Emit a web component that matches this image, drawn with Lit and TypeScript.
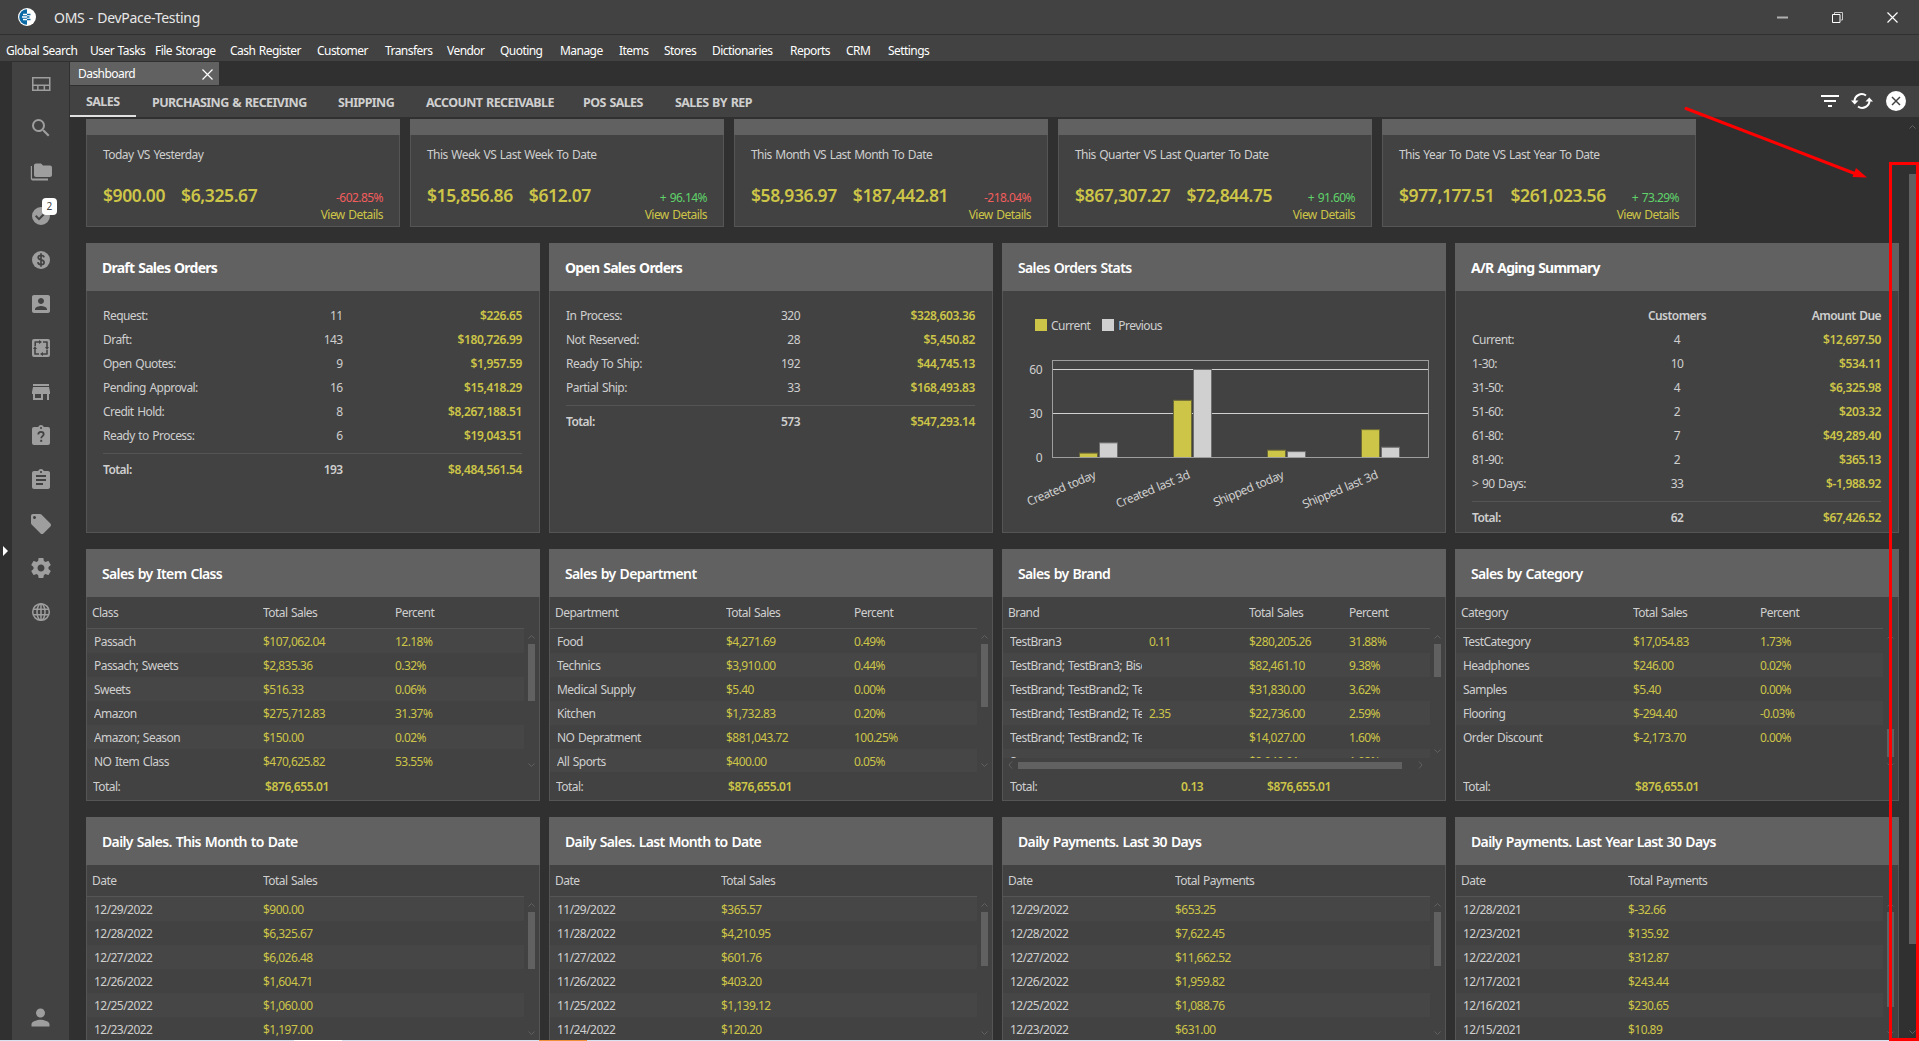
import { LitElement, css, html, svg } from "lit";
import { customElement, property } from "lit/decorators.js";
import { classMap } from "lit/directives/class-map.js";
import { styleMap } from "lit/directives/style-map.js";

interface MenuItem {
  label: string;
  width: number;
}

interface Kpi {
  title: string;
  caption: string;
  current: string;
  previous: string;
  change: string;
}

interface Summary {
  title: string;
  centered?: boolean;
  head?: string[];
  rows: string[][];
  total: string[];
}

interface Grid {
  title: string;
  // column starts in px, measured from the card's left edge
  cols: number[];
  head: string[];
  rows: string[][];
  stripe: "odd" | "even";
  total?: string[];
  totalCols?: number[];
  thumb: { top: number; height: number };
  horizontal?: boolean;
}

const MENU: MenuItem[] = [
  { label: "Global Search", width: 84 },
  { label: "User Tasks", width: 65 },
  { label: "File Storage", width: 75 },
  { label: "Cash Register", width: 87 },
  { label: "Customer", width: 68 },
  { label: "Transfers", width: 62 },
  { label: "Vendor", width: 53 },
  { label: "Quoting", width: 60 },
  { label: "Manage", width: 59 },
  { label: "Items", width: 45 },
  { label: "Stores", width: 48 },
  { label: "Dictionaries", width: 78 },
  { label: "Reports", width: 56 },
  { label: "CRM", width: 42 },
  { label: "Settings", width: 50 },
];

const SECTIONS: MenuItem[] = [
  { label: "SALES", width: 66 },
  { label: "PURCHASING & RECEIVING", width: 186 },
  { label: "SHIPPING", width: 88 },
  { label: "ACCOUNT RECEIVABLE", width: 157 },
  { label: "POS SALES", width: 92 },
  { label: "SALES BY REP", width: 108 },
];

const KPIS: Kpi[] = [
  { title: "Today", caption: "Today VS Yesterday", current: "$900.00", previous: "$6,325.67", change: "-602.85%" },
  { title: "This Week", caption: "This Week VS Last Week To Date", current: "$15,856.86", previous: "$612.07", change: "+ 96.14%" },
  { title: "This Month", caption: "This Month VS Last Month To Date", current: "$58,936.97", previous: "$187,442.81", change: "-218.04%" },
  { title: "This Quarter", caption: "This Quarter VS Last Quarter To Date", current: "$867,307.27", previous: "$72,844.75", change: "+ 91.60%" },
  { title: "This Year", caption: "This Year To Date VS Last Year To Date", current: "$977,177.51", previous: "$261,023.56", change: "+ 73.29%" },
];

const DRAFT_ORDERS: Summary = {
  title: "Draft Sales Orders",
  rows: [
    ["Request:", "11", "$226.65"],
    ["Draft:", "143", "$180,726.99"],
    ["Open Quotes:", "9", "$1,957.59"],
    ["Pending Approval:", "16", "$15,418.29"],
    ["Credit Hold:", "8", "$8,267,188.51"],
    ["Ready to Process:", "6", "$19,043.51"],
  ],
  total: ["Total:", "193", "$8,484,561.54"],
};

const OPEN_ORDERS: Summary = {
  title: "Open Sales Orders",
  rows: [
    ["In Process:", "320", "$328,603.36"],
    ["Not Reserved:", "28", "$5,450.82"],
    ["Ready To Ship:", "192", "$44,745.13"],
    ["Partial Ship:", "33", "$168,493.83"],
  ],
  total: ["Total:", "573", "$547,293.14"],
};

const AGING: Summary = {
  title: "A/R Aging Summary",
  centered: true,
  head: ["", "Customers", "Amount Due"],
  rows: [
    ["Current:", "4", "$12,697.50"],
    ["1-30:", "10", "$534.11"],
    ["31-50:", "4", "$6,325.98"],
    ["51-60:", "2", "$203.32"],
    ["61-80:", "7", "$49,289.40"],
    ["81-90:", "2", "$365.13"],
    ["> 90 Days:", "33", "$-1,988.92"],
  ],
  total: ["Total:", "62", "$67,426.52"],
};

const SALES_GRIDS: Grid[] = [
  {
    title: "Sales by Item Class",
    cols: [8, 177, 309],
    head: ["Class", "Total Sales", "Percent"],
    rows: [
      ["Passach", "$107,062.04", "12.18%"],
      ["Passach; Sweets", "$2,835.36", "0.32%"],
      ["Sweets", "$516.33", "0.06%"],
      ["Amazon", "$275,712.83", "31.37%"],
      ["Amazon; Season", "$150.00", "0.02%"],
      ["NO Item Class", "$470,625.82", "53.55%"],
    ],
    stripe: "odd",
    total: ["Total:", "$876,655.01"],
    totalCols: [7, 179],
    thumb: { top: 3, height: 57 },
  },
  {
    title: "Sales by Department",
    cols: [8, 177, 305],
    head: ["Department", "Total Sales", "Percent"],
    rows: [
      ["Food", "$4,271.69", "0.49%"],
      ["Technics", "$3,910.00", "0.44%"],
      ["Medical Supply", "$5.40", "0.00%"],
      ["Kitchen", "$1,732.83", "0.20%"],
      ["NO Depratment", "$881,043.72", "100.25%"],
      ["All Sports", "$400.00", "0.05%"],
    ],
    stripe: "even",
    total: ["Total:", "$876,655.01"],
    totalCols: [7, 179],
    thumb: { top: 3, height: 63 },
  },
  {
    title: "Sales by Brand",
    cols: [8, 147, 247, 347],
    head: ["Brand", "", "Total Sales", "Percent"],
    rows: [
      ["TestBran3", "0.11", "$280,205.26", "31.88%"],
      ["TestBrand; TestBran3; Biscuit", "", "$82,461.10", "9.38%"],
      ["TestBrand; TestBrand2; TestBran3", "", "$31,830.00", "3.62%"],
      ["TestBrand; TestBrand2; TestBran3", "2.35", "$22,736.00", "2.59%"],
      ["TestBrand; TestBrand2; TestBran3", "", "$14,027.00", "1.60%"],
      ["Samsung", "", "$8,949.01", "1.02%"],
    ],
    stripe: "even",
    total: ["Total:", "0.13", "$876,655.01"],
    totalCols: [8, 179, 265],
    thumb: { top: 3, height: 33 },
    horizontal: true,
  },
  {
    title: "Sales by Category",
    cols: [8, 178, 305],
    head: ["Category", "Total Sales", "Percent"],
    rows: [
      ["TestCategory", "$17,054.83", "1.73%"],
      ["Headphones", "$246.00", "0.02%"],
      ["Samples", "$5.40", "0.00%"],
      ["Flooring", "$-294.40", "-0.03%"],
      ["Order Discount", "$-2,173.70", "0.00%"],
    ],
    stripe: "even",
    total: ["Total:", "$876,655.01"],
    totalCols: [8, 180],
    thumb: { top: 88, height: 28 },
  },
];

const DAILY_GRIDS: Grid[] = [
  {
    title: "Daily Sales. This Month to Date",
    cols: [8, 177],
    head: ["Date", "Total Sales"],
    rows: [
      ["12/29/2022", "$900.00"],
      ["12/28/2022", "$6,325.67"],
      ["12/27/2022", "$6,026.48"],
      ["12/26/2022", "$1,604.71"],
      ["12/25/2022", "$1,060.00"],
      ["12/23/2022", "$1,197.00"],
    ],
    stripe: "odd",
    thumb: { top: 3, height: 57 },
  },
  {
    title: "Daily Sales. Last Month to Date",
    cols: [8, 172],
    head: ["Date", "Total Sales"],
    rows: [
      ["11/29/2022", "$365.57"],
      ["11/28/2022", "$4,210.95"],
      ["11/27/2022", "$601.76"],
      ["11/26/2022", "$403.20"],
      ["11/25/2022", "$1,139.12"],
      ["11/24/2022", "$120.20"],
    ],
    stripe: "odd",
    thumb: { top: 3, height: 54 },
  },
  {
    title: "Daily Payments. Last 30 Days",
    cols: [8, 173],
    head: ["Date", "Total Payments"],
    rows: [
      ["12/29/2022", "$653.25"],
      ["12/28/2022", "$7,622.45"],
      ["12/27/2022", "$11,662.52"],
      ["12/26/2022", "$1,959.82"],
      ["12/25/2022", "$1,088.76"],
      ["12/23/2022", "$631.00"],
    ],
    stripe: "odd",
    thumb: { top: 3, height: 54 },
  },
  {
    title: "Daily Payments. Last Year Last 30 Days",
    cols: [8, 173],
    head: ["Date", "Total Payments"],
    rows: [
      ["12/28/2021", "$-32.66"],
      ["12/23/2021", "$135.92"],
      ["12/22/2021", "$312.87"],
      ["12/17/2021", "$243.44"],
      ["12/16/2021", "$230.65"],
      ["12/15/2021", "$10.89"],
    ],
    stripe: "odd",
    thumb: { top: 3, height: 95 },
  },
];

const STATS = [
  { label: "Created today", current: 3, previous: 10 },
  { label: "Created last 3d", current: 39, previous: 60 },
  { label: "Shipped today", current: 5, previous: 4 },
  { label: "Shipped last 3d", current: 19, previous: 7 },
];

const SIDE_ICONS: string[] = [
  "M3 5h18.500v14H3zM4.500 6.500v6H20v-6zM4.500 14v3.500h3.600V14zM9.600 14v3.500h5V14zM16.100 14v3.500H20V14z",
  "M15.500 14h-.79l-.28-.27A6.470 6.470 0 0 0 16 9.500 6.500 6.500 0 1 0 9.500 16c1.610 0 3.090-.59 4.230-1.570l.27.28v.79l5 4.990L20.490 19l-4.990-5zm-6 0C7.010 14 5 11.990 5 9.500S7.010 5 9.500 5 14 7.010 14 9.500 11.990 14 9.500 14z",
  "M3 6H1.800v12.500c0 1.100.8 1.900 1.800 1.900H19v-1.800H3zM21 5.500h-7l-2-2H7c-1.100 0-2 .9-2 2v9.600c0 1.100.9 2 2 2h14c1.100 0 2-.9 2-2V7.500c0-1.100-.9-2-2-2z",
  "M12 3a9 9 0 1 0 0 18 9 9 0 0 0 0-18zm-2 13.500l-4-4 1.400-1.400 2.600 2.600 6.600-6.600L18 8.500z",
  "",
  "M3 5v14c0 1.100.89 2 2 2h14c1.100 0 2-.9 2-2V5c0-1.100-.9-2-2-2H5c-1.110 0-2 .9-2 2zm12 4c0 1.660-1.340 3-3 3s-3-1.340-3-3 1.340-3 3-3 3 1.340 3 3zm-9 8c0-2 4-3.100 6-3.100s6 1.100 6 3.100v1H6v-1z",
  "M5 3a2 2 0 0 0-2 2v14a2 2 0 0 0 2 2h14a2 2 0 0 0 2-2V5a2 2 0 0 0-2-2zM6 5.200h4V4l3 2-3 2V6.800H7V10H5.400V5.800zM14 5.200h4.200l.6.6V11H20l-2 3-2-3h1.200V6.800H14zM4 13l2-3 2 3H6.800v4.200H10v1.600H5.800l-.6-.6V13zM14 16v1.200h3.200V14h1.600v4.200l-.6.6H14V20l-3-2z",
  "M20 4H4v2h16V4zm1 10v-2l-1-5H4l-1 5v2h1v6h10v-6h4v6h2v-6h1zm-9 4H6v-4h6v4z",
  "",
  "M19 3h-4.180C14.400 1.840 13.300 1 12 1c-1.300 0-2.400.84-2.820 2H5c-1.100 0-2 .9-2 2v14c0 1.100.9 2 2 2h14c1.100 0 2-.9 2-2V5c0-1.100-.9-2-2-2zm-7 0c.55 0 1 .45 1 1s-.45 1-1 1-1-.45-1-1 .45-1 1-1zm2 14H7v-2h7v2zm3-4H7v-2h10v2zm0-4H7V7h10v2z",
  "M21.410 11.580l-9-9C12.050 2.220 11.550 2 11 2H4c-1.100 0-2 .9-2 2v7c0 .55.22 1.050.59 1.420l9 9c.36.36.86.58 1.410.58.55 0 1.050-.22 1.410-.59l7-7c.37-.36.59-.86.59-1.410 0-.55-.23-1.060-.59-1.420zM5.500 7C4.670 7 4 6.330 4 5.500S4.670 4 5.500 4 7 4.670 7 5.500 6.330 7 5.500 7z",
  "M19.430 12.980c.04-.32.07-.64.07-.98s-.03-.66-.07-.98l2.110-1.650c.19-.15.24-.42.12-.64l-2-3.460c-.12-.22-.39-.3-.61-.22l-2.490 1c-.52-.4-1.080-.73-1.690-.98l-.38-2.650C14.460 2.180 14.250 2 14 2h-4c-.25 0-.46.18-.49.42l-.38 2.650c-.61.25-1.170.59-1.690.98l-2.490-1c-.23-.09-.49 0-.61.22l-2 3.460c-.13.22-.07.49.12.64l2.110 1.650c-.04.32-.07.65-.07.98s.03.66.07.98l-2.110 1.650c-.19.15-.24.42-.12.64l2 3.460c.12.22.39.3.61.22l2.490-1c.52.4 1.080.73 1.690.98l.38 2.650c.03.24.24.42.49.42h4c.25 0 .46-.18.49-.42l.38-2.650c.61-.25 1.170-.59 1.690-.98l2.490 1c.23.09.49 0 .61-.22l2-3.460c.12-.22.07-.49-.12-.64l-2.110-1.650zM12 15.500c-1.930 0-3.500-1.570-3.500-3.500s1.570-3.500 3.500-3.500 3.500 1.570 3.500 3.500-1.570 3.500-3.500 3.500z",
  "",
];

const ICON_DOLLAR = svg`
  <circle cx="12" cy="12" r="9" fill="#9e9e9e"></circle>
  <path d="M15 9.300C14.800 7.900 13.600 7.300 12.100 7.300c-1.700 0-2.900.8-2.900 2.200 0 3.200 5.900 1.500 5.900 4.800 0 1.500-1.300 2.400-3 2.400-1.800 0-3-.8-3.200-2.500M12 5.300v13.400" fill="none" stroke="#424242" stroke-width="1.700"></path>`;

const ICON_QUESTION = svg`
  <path fill="#9e9e9e" fill-rule="evenodd" d="M19 3h-4.200a3 3 0 0 0-5.600 0H5a2 2 0 0 0-2 2v14c0 1.100.9 2 2 2h14a2 2 0 0 0 2-2V5a2 2 0 0 0-2-2zm-7 0a1 1 0 1 1 0 2 1 1 0 0 1 0-2z"></path>
  <path d="M9.300 10.400c0-1.600 1.200-2.600 2.700-2.600s2.700 1 2.700 2.400c0 1.900-2.500 2.100-2.500 4.100" fill="none" stroke="#424242" stroke-width="1.800"></path>
  <rect x="11.200" y="15.800" width="2" height="2" fill="#424242"></rect>`;

const ICON_GLOBE = svg`
  <g fill="none" stroke="#9e9e9e" stroke-width="1.500">
    <circle cx="12" cy="12" r="8.300"></circle>
    <ellipse cx="12" cy="12" rx="4" ry="8.300"></ellipse>
    <path d="M4.500 9.200h15M4.500 14.800h15M12 4v16"></path>
  </g>`;

const FONT = css`
  :host {
    font-family: "Noto Sans", "Open Sans", sans-serif;
    font-size: 12px;
    letter-spacing: -0.55px;
    word-spacing: 1px;
    color: #cfcfcf;
  }
`;

const CARD = css`
  .card {
    display: flex;
    flex-direction: column;
    height: 100%;
    box-sizing: border-box;
    background: #424242;
    border: 1px solid #555;
  }
  .title {
    flex: none;
    height: 48px;
    margin: -1px -1px 0;
    padding: 0 16px;
    line-height: 49px;
    box-sizing: border-box;
    background: #616161;
    color: #fff;
    font-size: 14px;
    font-weight: 600;
    letter-spacing: -0.65px;
    white-space: nowrap;
  }
`;

@customElement("kpi-card")
export class KpiCard extends LitElement {
  @property({ attribute: false }) kpi!: Kpi;

  static styles = [
    FONT,
    CARD,
    css`
      :host {
        display: block;
        width: 314px;
        height: 140px;
      }
      .title {
        line-height: 47px;
      }
      .body {
        padding: 10px 16px 0;
      }
      .caption {
        line-height: 20px;
      }
      .values {
        display: flex;
        align-items: center;
        gap: 16px;
        height: 22px;
        margin-top: 19px;
      }
      .value {
        color: #cdc548;
        font-size: 17.5px;
        font-weight: 600;
        letter-spacing: -0.4px;
      }
      .change {
        margin: 4px 0 0 auto;
        color: #f25d5d;
      }
      .up {
        color: #5fd36a;
      }
      .link {
        text-align: right;
        line-height: 17px;
        color: #cdc548;
      }
    `,
  ];

  render() {
    const up = this.kpi.change.startsWith("+");
    return html`
      <div class="card">
        <div class="title">${this.kpi.title}</div>
        <div class="body">
          <div class="caption">${this.kpi.caption}</div>
          <div class="values">
            <span class="value">${this.kpi.current}</span>
            <span class="value">${this.kpi.previous}</span>
            <span class=${classMap({ change: true, up })}>${this.kpi.change}</span>
          </div>
          <div class="link">View Details</div>
        </div>
      </div>
    `;
  }
}

@customElement("summary-card")
export class SummaryCard extends LitElement {
  @property({ attribute: false }) data!: Summary;

  static styles = [
    FONT,
    CARD,
    css`
      :host {
        display: block;
        height: 290px;
      }
      .title {
        font-weight: 700;
        letter-spacing: -0.75px;
      }
      .body {
        padding: 13px 17px 0 16px;
      }
      .row {
        display: grid;
        grid-template-columns: 1fr 80px 42.8%;
        line-height: 24px;
      }
      .row > span:nth-child(n + 2) {
        text-align: right;
      }
      .row > .money {
        color: #cdc548;
        font-weight: 600;
        letter-spacing: -0.35px;
      }
      .centered .row {
        grid-template-columns: 1fr 100px 154px;
      }
      .centered .row > span:nth-child(2) {
        text-align: center;
      }
      .strong {
        font-weight: 600;
      }
      .total {
        margin-top: 5px;
        padding-top: 4px;
        border-top: 1px solid #555;
      }
    `,
  ];

  render() {
    const { title, head, rows, total, centered } = this.data;
    return html`
      <div class="card">
        <div class="title">${title}</div>
        <div class=${classMap({ body: true, centered: !!centered })}>
          ${head && html`<div class="row strong">${head.map((h) => html`<span>${h}</span>`)}</div>`}
          ${rows.map(
            ([label, count, amount]) => html`
              <div class="row"><span>${label}</span><span>${count}</span><span class="money">${amount}</span></div>
            `
          )}
          <div class="row strong total">
            <span>${total[0]}</span><span>${total[1]}</span><span class="money">${total[2]}</span>
          </div>
        </div>
      </div>
    `;
  }
}

@customElement("stats-card")
export class StatsCard extends LitElement {
  static styles = [
    FONT,
    CARD,
    css`
      :host {
        display: block;
        height: 290px;
      }
      .legend {
        display: flex;
        align-items: center;
        height: 16px;
        padding: 26px 0 0 32px;
      }
      .swatch {
        width: 12px;
        height: 12px;
        margin-right: 4px;
        background: #cdc548;
      }
      .swatch.previous {
        margin-left: 12px;
        background: #d0d0d0;
      }
      svg {
        display: block;
        margin-top: 2px;
      }
      text {
        fill: #cfcfcf;
        text-anchor: end;
      }
    `,
  ];

  render() {
    // value -> y, 44px for every 30 orders
    const y = (v: number) => 122.5 - (v * 44) / 30;
    return html`
      <div class="card">
        <div class="title">Sales Orders Stats</div>
        <div class="legend">
          <span class="swatch"></span>Current<span class="swatch previous"></span>Previous
        </div>
        <svg width="442" height="195">
          ${[60, 30, 0].map(
            (v) => svg`
              <path d="M49 ${y(v)}H425" stroke="#d0d0d0"></path>
              <text x="39" y=${y(v) + 4.5}>${v}</text>`
          )}
          <rect x="49.5" y="25.5" width="376" height="97" fill="none" stroke="#9e9e9e"></rect>
          ${STATS.map((s, i) => {
            const x = 76.5 + i * 94;
            return svg`
              <rect x=${x} y=${y(s.current)} width="18" height=${122.5 - y(s.current)} fill="#cdc548" stroke="#6d6a35"></rect>
              <rect x=${x + 20} y=${y(s.previous)} width="18" height=${122.5 - y(s.previous)} fill="#d0d0d0" stroke="#6e6e6e"></rect>
              <text transform="translate(${x + 17} 143) rotate(-22.5)">${s.label}</text>`;
          })}
          <path d="M49 122.5H425" stroke="#9e9e9e"></path>
        </svg>
      </div>
    `;
  }
}

@customElement("grid-card")
export class GridCard extends LitElement {
  @property({ attribute: false }) data!: Grid;

  static styles = [
    FONT,
    CARD,
    css`
      :host {
        display: block;
        height: 252px;
      }
      .row {
        display: grid;
        height: 24px;
        line-height: 24px;
      }
      .row span {
        overflow: hidden;
        margin-right: 7px;
        white-space: nowrap;
        color: #cdc548;
      }
      .row span:first-child,
      .head span {
        color: #cfcfcf;
      }
      .head {
        height: 31px;
        line-height: 32px;
        margin-right: 15px;
        border-bottom: 1px solid #555;
      }
      .head span:first-child {
        margin-left: -2px;
      }
      .scroller {
        display: flex;
        height: 143px;
      }
      .rows {
        flex: 1;
        overflow: hidden;
      }
      .rows .row {
        line-height: 26px;
      }
      .odd .row:nth-child(odd),
      .even .row:nth-child(even) {
        background: #464646;
      }
      .bar {
        flex: none;
        display: flex;
        flex-direction: column;
        align-items: center;
        width: 7px;
        margin: 4px 4px 0;
      }
      .bar svg {
        flex: none;
        display: block;
        margin-top: auto;
      }
      .bar svg:first-child {
        margin: 0;
      }
      .bar .arrow {
        margin-bottom: 3px;
      }
      svg {
        fill: none;
        stroke: #606060;
      }
      .thumb {
        width: 7px;
        background: #616161;
      }
      .horizontal .scroller {
        height: 129px;
      }
      .hbar {
        display: flex;
        align-items: center;
        justify-content: space-between;
        height: 14px;
        margin: 0 21px 0 4px;
      }
      .hthumb {
        width: 384px;
        height: 7px;
        margin-right: auto;
        margin-left: 5px;
        background: #616161;
      }
      .total {
        margin-top: 3px;
      }
      .total span:nth-child(n + 2) {
        font-weight: 600;
        letter-spacing: -0.4px;
      }
    `,
  ];

  private template(cols: number[]) {
    const tracks = cols.map((c, i) => (i + 1 < cols.length ? `${cols[i + 1] - c}px` : "1fr"));
    return styleMap({ gridTemplateColumns: tracks.join(" "), paddingLeft: `${cols[0] - 1}px` });
  }

  render() {
    const { title, cols, head, rows, stripe, total, totalCols, thumb, horizontal } = this.data;
    return html`
      <div class=${classMap({ card: true, horizontal: !!horizontal })}>
        <div class="title">${title}</div>
        <div class="row head" style=${this.template(cols)}>${head.map((h) => html`<span>${h}</span>`)}</div>
        <div class="scroller">
          <div class="rows ${stripe}">
            ${rows.map(
              (row) => html`<div class="row" style=${this.template(cols)}>${row.map((c) => html`<span>${c}</span>`)}</div>`
            )}
          </div>
          <div class="bar">
            <svg width="7" height="8"><path d="M.5 5.500l3-3 3 3"></path></svg>
            <div class="thumb" style=${styleMap({ height: `${thumb.height}px`, marginTop: `${thumb.top}px` })}></div>
            <svg class="arrow" width="7" height="8"><path d="M.5 2.500l3 3 3-3"></path></svg>
          </div>
        </div>
        ${horizontal
          ? html`<div class="hbar">
              <svg width="6" height="8"><path d="M5 .5L2 4l3 3.500"></path></svg>
              <div class="hthumb"></div>
              <svg width="6" height="8"><path d="M1 .5L4 4 1 7.500"></path></svg>
            </div>`
          : ""}
        ${total && html`<div class="row total" style=${this.template(totalCols!)}>${total.map((c) => html`<span>${c}</span>`)}</div>`}
      </div>
    `;
  }
}

@customElement("app-root")
export class AppRoot extends LitElement {
  static styles = [
    FONT,
    css`
      :host {
        position: relative;
        display: flex;
        flex-direction: column;
        width: 1919px;
        height: 1041px;
        overflow: hidden;
        background: #303030;
      }
      .titlebar {
        flex: none;
        display: flex;
        align-items: center;
        height: 34px;
        padding: 0 21px 0 18px;
        border-bottom: 1px solid #303030;
        background: #424242;
        color: #e8e8e8;
        font-size: 14px;
        letter-spacing: -0.3px;
      }
      .name {
        flex: 1;
        padding: 1px 0 0 18px;
      }
      .winbtns {
        display: flex;
        gap: 44px;
      }
      .menu {
        flex: none;
        display: flex;
        height: 26px;
        padding-left: 6px;
        background: #424242;
        color: #fff;
        line-height: 31px;
        white-space: nowrap;
      }
      .main {
        flex: 1;
        display: flex;
        min-height: 0;
      }
      .edge {
        display: flex;
        align-items: center;
        width: 12px;
      }
      .sidebar {
        display: flex;
        flex-direction: column;
        align-items: center;
        gap: 20px;
        width: 57px;
        margin: 1px 1px 0 0;
        padding: 10px 0 9px;
        box-sizing: border-box;
        background: #424242;
      }
      .side {
        position: relative;
        width: 24px;
        height: 24px;
      }
      .side svg {
        display: block;
        fill: #9e9e9e;
      }
      .user {
        width: 27px;
        height: 27px;
        margin-top: auto;
      }
      .badge {
        position: absolute;
        left: 13px;
        top: -6px;
        width: 15px;
        height: 17px;
        border-radius: 4px;
        background: #fff;
        color: #424242;
        font-size: 10px;
        line-height: 17px;
        text-align: center;
      }
      .page {
        flex: 1;
        display: flex;
        flex-direction: column;
        min-width: 0;
      }
      .tab {
        flex: none;
        display: flex;
        align-items: center;
        justify-content: space-between;
        width: 149px;
        height: 23px;
        margin: 1px 0;
        padding: 1px 6px 0 8px;
        box-sizing: border-box;
        background: #616161;
        color: #fff;
        line-height: 24px;
      }
      .sections {
        flex: none;
        display: flex;
        height: 31px;
        background: #424242;
        font-size: 12.5px;
        font-weight: 700;
        letter-spacing: -0.6px;
        line-height: 33px;
      }
      .section {
        padding-left: 16px;
        box-sizing: border-box;
        white-space: nowrap;
      }
      .section.active {
        border-bottom: 2px solid #e0e0e0;
        line-height: 31px;
      }
      .tools {
        display: flex;
        align-items: center;
        gap: 12px;
        margin-left: auto;
        padding: 0 13px 1px 0;
      }
      .tools svg:last-child {
        margin-left: 1px;
      }
      .content {
        display: flex;
        flex: 1;
        min-height: 0;
        margin-top: 2px;
        overflow: hidden;
      }
      .board {
        display: flex;
        flex-direction: column;
        gap: 16px;
        width: 1813px;
        margin: -32px 0 0 16px;
      }
      .kpis {
        display: flex;
        gap: 10px;
      }
      .cards {
        display: grid;
        grid-template-columns: 454px 444px 444px 444px;
        gap: 9px;
      }
      .pagebar {
        display: flex;
        flex-direction: column;
        width: 7px;
        margin: 4px 0 4px 10px;
      }
      .pagebar svg {
        fill: none;
        stroke: #606060;
      }
      .pagethumb {
        height: 770px;
        margin: 43px 0 auto;
        background: #616161;
      }
      .taskbar {
        flex: none;
        height: 1px;
        background: linear-gradient(
          90deg,
          #d6e2ef 294px,
          #fff 294px 342px,
          #d6e2ef 342px 539px,
          #f0923c 539px 587px,
          #d6e2ef 587px
        );
      }
      .marker {
        position: absolute;
        left: 1680px;
        top: 100px;
        fill: none;
        stroke: #f00;
        stroke-width: 3;
      }
    `,
  ];

  private sideIcon(path: string, index: number) {
    const special: Record<number, unknown> = { 4: ICON_DOLLAR, 8: ICON_QUESTION, 12: ICON_GLOBE };
    return html`
      <div class="side">
        <svg width="24" height="24" viewBox="0 0 24 24">
          ${special[index] ?? svg`<path fill-rule="evenodd" d=${path}></path>`}
        </svg>
        ${index === 3 ? html`<span class="badge">2</span>` : ""}
      </div>
    `;
  }

  render() {
    return html`
      <div class="titlebar">
        <svg width="18" height="18" viewBox="0 0 18 18">
          <circle cx="9" cy="9" r="9" fill="#fff"></circle>
          <path d="M9 1.200a7.800 7.800 0 0 0 0 15.600z" fill="#0b6aa5"></path>
          <path d="M5 6.500h4M4 9h5M5 11.500h4" stroke="#fff" stroke-width="1.300"></path>
          <path d="M9 6.500h3.500M9 9h2.500M9 11.500h3.500" stroke="#0b6aa5" stroke-width="1.300"></path>
        </svg>
        <span class="name">OMS - DevPace-Testing</span>
        <div class="winbtns">
          <svg width="11" height="11"><path d="M0 5.500h11" stroke="#b0b0b0" stroke-width="2"></path></svg>
          <svg width="11" height="11" fill="none" stroke="#fff">
            <path d="M.5 2.500h7.500v8H.5z"></path>
            <path d="M2.500 2V.5h8v7.500H9" stroke="#c8c8c8"></path>
          </svg>
          <svg width="11" height="11"><path d="M.5.5l10 10M10.500.5l-10 10" stroke="#fff" stroke-width="1.200"></path></svg>
        </div>
      </div>
      <nav class="menu">
        ${MENU.map((m) => html`<span style=${styleMap({ width: `${m.width}px` })}>${m.label}</span>`)}
      </nav>
      <div class="main">
        <div class="edge">
          <svg width="9" height="10"><path d="M3 0l5 5-5 5z" fill="#fff"></path></svg>
        </div>
        <aside class="sidebar">
          ${SIDE_ICONS.map((path, i) => this.sideIcon(path, i))}
          <div class="side user">
            <svg width="27" height="27" viewBox="0 0 24 24">
              <path d="M12 12c2.210 0 4-1.790 4-4s-1.790-4-4-4-4 1.790-4 4 1.790 4 4 4zm0 2c-2.670 0-8 1.340-8 4v2h16v-2c0-2.660-5.330-4-8-4z"></path>
            </svg>
          </div>
        </aside>
        <div class="page">
          <div class="tab">
            <span>Dashboard</span>
            <svg width="11" height="11"><path d="M.5.5l10 10M10.500.5l-10 10" stroke="#fff" stroke-width="1.200"></path></svg>
          </div>
          <div class="sections">
            ${SECTIONS.map(
              (s, i) => html`
                <span class=${classMap({ section: true, active: i === 0 })} style=${styleMap({ width: `${s.width}px` })}
                  >${s.label}</span
                >
              `
            )}
            <div class="tools">
              <svg width="18" height="14"><path d="M0 2h18M3 7h12M7 12h4" stroke="#fff" stroke-width="2"></path></svg>
              <svg width="22" height="18" viewBox="0 0 22 18">
                <path d="M3.500 9.500a7.300 7.300 0 0 1 11.500-6M18.500 8.500a7.300 7.300 0 0 1-11.500 6" fill="none" stroke="#fff" stroke-width="2"></path>
                <path d="M0 8.500h7.500L3.700 12.500zM14.500 9.500H22L18.300 5.500z" fill="#fff"></path>
              </svg>
              <svg width="20" height="20">
                <circle cx="10" cy="10" r="10" fill="#fff"></circle>
                <path d="M6 6l8 8M14 6l-8 8" stroke="#424242" stroke-width="1.500"></path>
              </svg>
            </div>
          </div>
          <div class="content">
            <div class="board">
              <div class="kpis">${KPIS.map((k) => html`<kpi-card .kpi=${k}></kpi-card>`)}</div>
              <div class="cards">
                <summary-card .data=${DRAFT_ORDERS}></summary-card>
                <summary-card .data=${OPEN_ORDERS}></summary-card>
                <stats-card></stats-card>
                <summary-card .data=${AGING}></summary-card>
              </div>
              <div class="cards">${SALES_GRIDS.map((g) => html`<grid-card .data=${g}></grid-card>`)}</div>
              <div class="cards">${DAILY_GRIDS.map((g) => html`<grid-card .data=${g}></grid-card>`)}</div>
            </div>
            <div class="pagebar">
              <svg width="7" height="8"><path d="M.5 5.500l3-3 3 3"></path></svg>
              <div class="pagethumb"></div>
              <svg width="7" height="8"><path d="M.5 2.500l3 3 3-3"></path></svg>
            </div>
          </div>
        </div>
      </div>
      <div class="taskbar"></div>
      <svg class="marker" width="239" height="941">
        <path d="M6 8.500L176 74" stroke-linecap="round"></path>
        <path d="M176 68l11 9.500-14.500-.5z" fill="#f00" stroke="none"></path>
        <path d="M210.500 63.500h27v876h-27z"></path>
      </svg>
    `;
  }
}

declare global {
  interface HTMLElementTagNameMap {
    "app-root": AppRoot;
    "kpi-card": KpiCard;
    "summary-card": SummaryCard;
    "stats-card": StatsCard;
    "grid-card": GridCard;
  }
}
